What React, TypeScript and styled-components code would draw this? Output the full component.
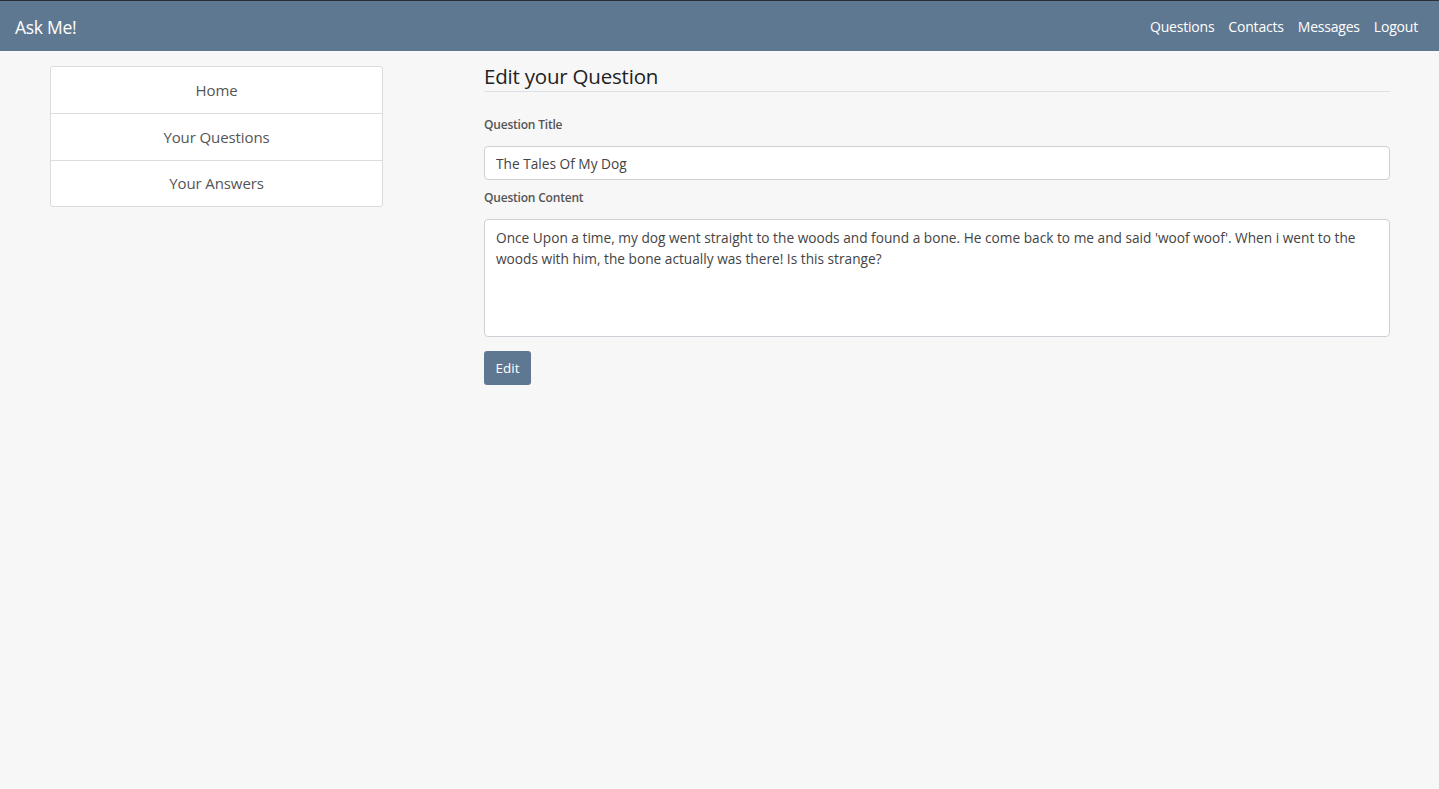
import React from "react";
import styled, { createGlobalStyle } from "styled-components";

const Global = createGlobalStyle`
  html, body { margin: 0; padding: 0; background: #f7f7f7; }
  body { font-family: "Open Sans", "Noto Sans", sans-serif; color: #333; }
  * { box-sizing: border-box; }
`;

const Page = styled.div`
  min-height: 789px;
  background: #f7f7f7;
`;

const NavBar = styled.nav`
  height: 51px;
  background: #5f7891;
  border-top: 1px solid #2a2f35;
  display: flex;
  align-items: center;
  justify-content: space-between;
  padding: 0 21px 0 15px;
`;

const Brand = styled.a`
  color: #fff;
  font-size: 17.5px;
  letter-spacing: -0.3px;
  text-decoration: none;
  margin-top: 1px;
`;

const NavLinks = styled.div`
  display: flex;
  gap: 14px;
`;

const NavLink = styled.a`
  color: #fff;
  font-size: 14px;
  letter-spacing: -0.2px;
  text-decoration: none;
  margin-top: 1px;
`;

const Body = styled.div`
  display: flex;
  align-items: flex-start;
  padding: 15px 49px 0 50px;
  gap: 101px;
`;

const SideList = styled.ul`
  width: 333px;
  flex: none;
  margin: 0;
  padding: 0;
  list-style: none;
  background: #fff;
  border: 1px solid #dcdcdc;
  border-radius: 3px;
`;

const SideItem = styled.li`
  height: 46.3px;
  display: flex;
  align-items: center;
  justify-content: center;
  font-size: 15px;
  color: #555;
  letter-spacing: -0.1px;
  & + & { border-top: 1px solid #dcdcdc; }
`;

const Main = styled.main`
  flex: 1;
  display: flex;
  flex-direction: column;
`;

const Heading = styled.h2`
  margin: 0;
  font-weight: 400;
  font-size: 20.5px;
  line-height: 21px;
  color: #222;
  letter-spacing: -0.2px;
  padding-bottom: 4px;
  border-bottom: 1px solid #dde1e6;
`;

const Label = styled.label<{ $top: number }>`
  font-size: 12px;
  font-weight: 600;
  color: #555;
  letter-spacing: -0.2px;
  margin-top: ${(p) => p.$top}px;
  margin-bottom: 13px;
`;

const Input = styled.div`
  height: 34px;
  background: #fff;
  border: 1px solid #cdd0d6;
  border-radius: 4px;
  padding: 0 11px;
  display: flex;
  align-items: center;
  font-size: 13.7px;
  color: #444;
`;

const TextArea = styled.div`
  height: 118px;
  background: #fff;
  border: 1px solid #cdd0d6;
  border-radius: 4px;
  padding: 7px 11px;
  font-size: 13.7px;
  line-height: 21px;
  color: #444;
`;

const Button = styled.button`
  align-self: flex-start;
  margin-top: 14px;
  height: 34px;
  width: 47px;
  border: none;
  border-radius: 3px;
  background: #5f7891;
  color: #fff;
  font-family: inherit;
  font-size: 13.5px;
  padding: 0;
`;

export default function App() {
  return (
    <Page>
      <Global />
      <NavBar>
        <Brand>Ask Me!</Brand>
        <NavLinks>
          <NavLink>Questions</NavLink>
          <NavLink>Contacts</NavLink>
          <NavLink>Messages</NavLink>
          <NavLink>Logout</NavLink>
        </NavLinks>
      </NavBar>
      <Body>
        <SideList>
          <SideItem>Home</SideItem>
          <SideItem>Your Questions</SideItem>
          <SideItem>Your Answers</SideItem>
        </SideList>
        <Main>
          <Heading>Edit your Question</Heading>
          <Label $top={24}>Question Title</Label>
          <Input>The Tales Of My Dog</Input>
          <Label $top={9}>Question Content</Label>
          <TextArea>
            Once Upon a time, my dog went straight to the woods and found a bone. He come back to me and said 'woof woof'. When i went to the woods with him, the bone actually was there! Is this strange?
          </TextArea>
          <Button>Edit</Button>
        </Main>
      </Body>
    </Page>
  );
}
